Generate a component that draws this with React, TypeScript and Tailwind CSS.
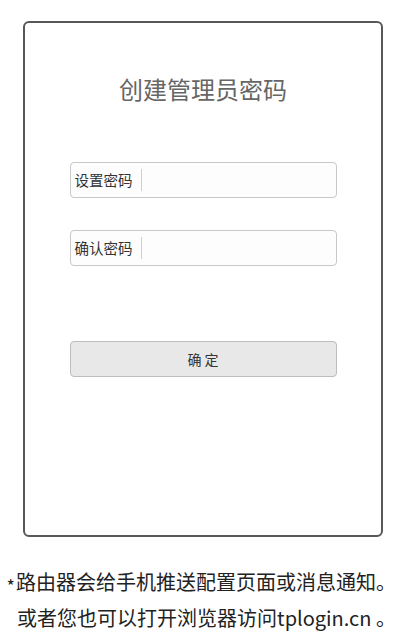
import { useState } from 'react';

const cjk = { fontFamily: '"Noto Sans CJK SC", "Noto Sans", sans-serif' };

function PasswordField({ label }: { label: string }) {
  const [value, setValue] = useState('');
  return (
    <div className="flex h-[36px] w-[267px] items-center rounded-[4px] border border-[#c8c8c8] bg-[#fdfdfd]">
      <span className="pl-[4px] pr-[8px] text-[14.5px] leading-none text-[#333]">{label}</span>
      <span className="h-[22px] w-px bg-[#cfcfcf]" />
      <input
        type="password"
        value={value}
        onChange={(e) => setValue(e.target.value)}
        className="h-full min-w-0 flex-1 bg-transparent px-2 text-[14px] outline-none"
      />
    </div>
  );
}

export default function App() {
  return (
    <div className="min-h-[633px] bg-white pt-[21px]" style={cjk}>
      <div className="ml-[23px] h-[516px] w-[360px] rounded-[6px] border-2 border-[#585858]">
        <div className="flex flex-col items-center pt-[50px]">
          <h1 className="text-[24px] leading-[32px] font-normal text-[#666]">创建管理员密码</h1>

          <div className="mt-[57px]">
            <PasswordField label="设置密码" />
          </div>
          <div className="mt-[32px]">
            <PasswordField label="确认密码" />
          </div>

          <button className="mt-[75px] h-[36px] w-[267px] rounded-[4px] border border-[#bdbdbd] bg-[#e8e8e8] text-[14px] text-[#333]">
            确 定
          </button>
        </div>
      </div>

      {/* 底部提示 */}
      <div className="mt-[27px] pr-[4px] text-right text-[20px] leading-[36px] text-[#222]">
        <p>
          <span className="relative top-[3px] mr-[1px] text-[18px]">*</span>路由器会给手机推送配置页面或消息通知。
        </p>
        <p>或者您也可以打开浏览器访问tplogin.cn 。</p>
      </div>
    </div>
  );
}
